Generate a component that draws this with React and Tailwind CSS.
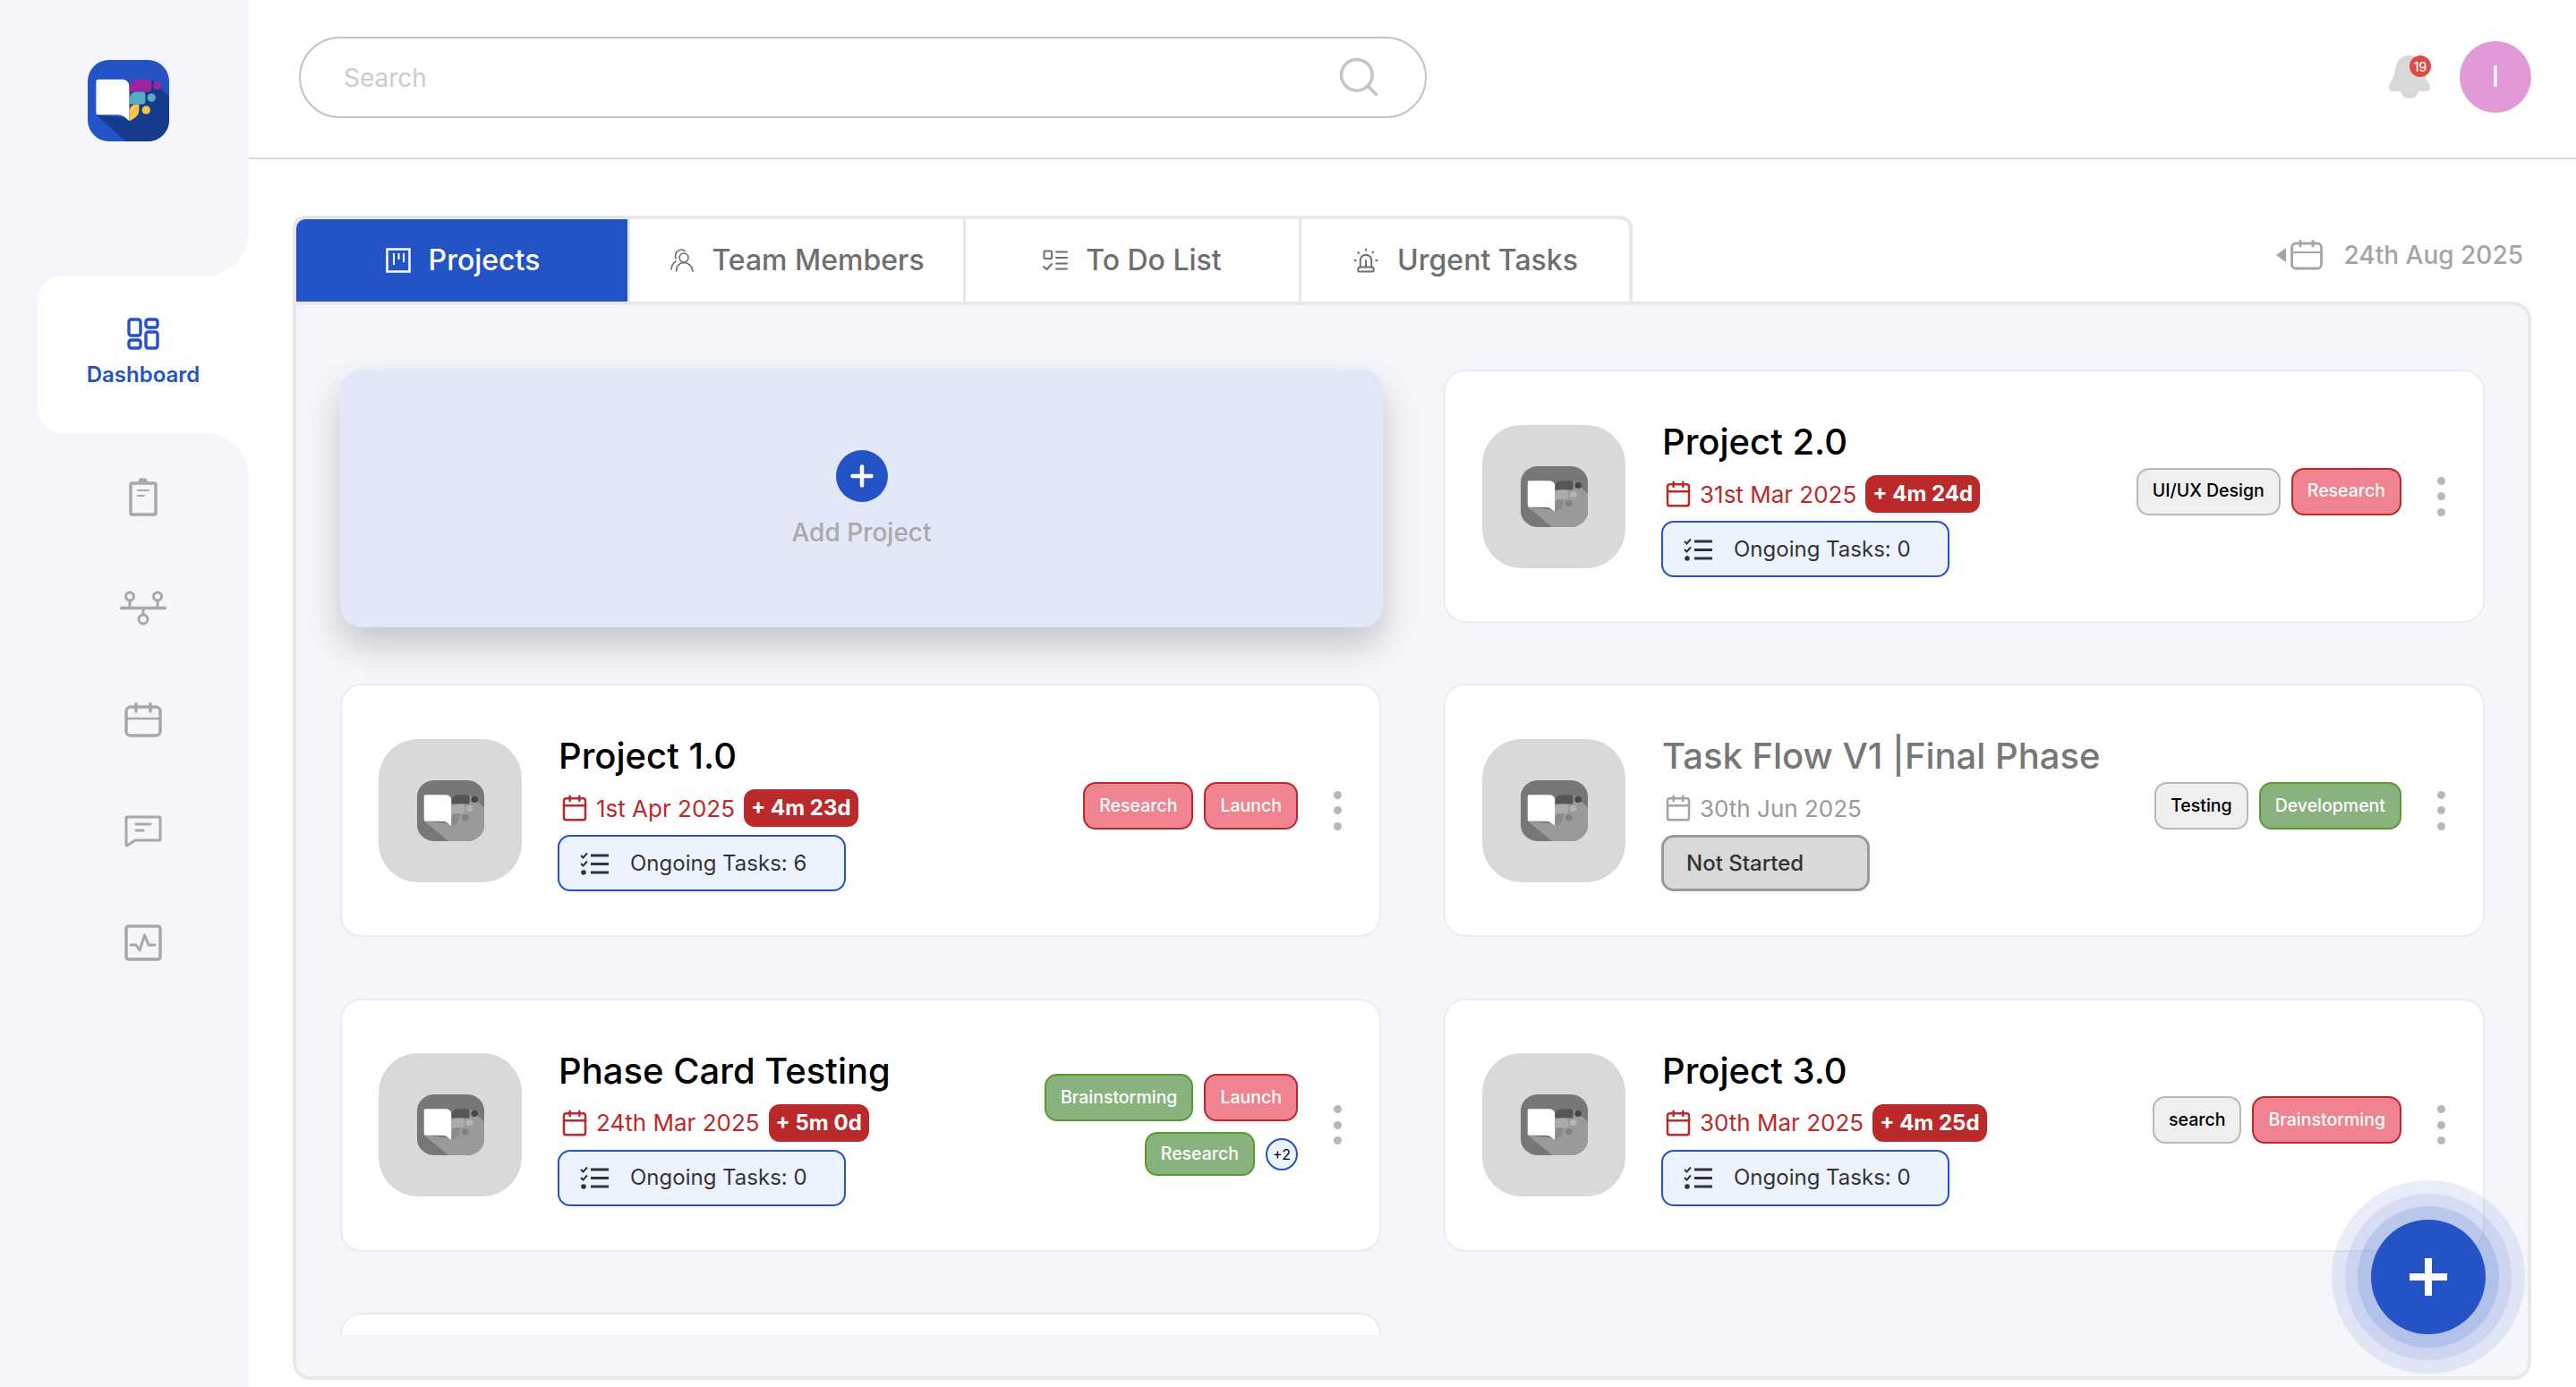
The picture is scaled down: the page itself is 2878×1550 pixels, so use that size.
import { Calendar, Search, Siren, Plus } from 'lucide-react'

const projects = [
  { title: 'Project 2.0', date: '31st Mar 2025', badge: '+ 4m 24d', tasks: 0, tags: [['UI/UX Design', 'gray'], ['Research', 'red']] },
  { title: 'Project 1.0', date: '1st Apr 2025', badge: '+ 4m 23d', tasks: 6, tags: [['Research', 'red'], ['Launch', 'red']] },
  { title: 'Task Flow V1 |Final Phase', date: '30th Jun 2025', muted: true, tags: [['Testing', 'gray'], ['Development', 'green']] },
  { title: 'Phase Card Testing', date: '24th Mar 2025', badge: '+ 5m 0d', tasks: 0, wrap: true, tags: [['Brainstorming', 'green'], ['Launch', 'red'], ['Research', 'green']], more: 2 },
  { title: 'Project 3.0', date: '30th Mar 2025', badge: '+ 4m 25d', tasks: 0, tags: [['search', 'gray'], ['Brainstorming', 'red']] },
]

const tagStyles = {
  gray: 'bg-[#efefef] border-[#b8b8b8] text-black',
  red: 'bg-[#f08391] border-[#ba2a2a] text-white',
  green: 'bg-[#8ab27f] border-[#569c30] text-white',
}

function Logo({ gray, className }) {
  const c = gray
    ? { bg: '#777777', shadow: '#9a9a9a', a: '#565656', b: '#ababab', d: '#8a8a8a', dotA: '#444444', dotB: '#b5b5b5', dotC: '#808080' }
    : { bg: '#2353c5', shadow: '#163a8c', a: '#9c259f', b: '#56abc4', d: '#f7c544', dotA: '#9c259f', dotB: '#56abc4', dotC: '#f7c544' }
  return (
    <svg viewBox="0 0 92 92" className={className} preserveAspectRatio="none">
      <defs>
        <clipPath id={gray ? 'logoGray' : 'logoColor'}>
          <rect width="92" height="92" rx="24" />
        </clipPath>
      </defs>
      <g clipPath={`url(#${gray ? 'logoGray' : 'logoColor'})`}>
        <rect width="92" height="92" fill={c.bg} />
        <path d="M10 62 L43 92 L92 92 L92 41 L72 22 L47 30 L47 66 Z" fill={c.shadow} />
      </g>
      <path d="M12 22 H40 Q47 23 47 31 V69 L41 64 Q38 62 34 62 H12 Q9.5 62 9.5 60 V24 Q9.5 22 12 22 Z" fill="#fff" />
      <path d="M47 36 V31 Q48 22 57 22 H69 Q72 22 72 25 V33 Q72 36 69 36 Z" fill={c.a} />
      <path d="M47 50 V44 Q48 36 56 36 H62 Q65 36 65 39 V47 Q65 50 62 50 Z" fill={c.b} />
      <path d="M47 69 V58 Q48 50 55 50 H58 V57 Q58 64 47 69 Z" fill={c.d} />
      <circle cx="78.7" cy="29" r="4.7" fill={c.dotA} />
      <circle cx="72" cy="42.5" r="4.7" fill={c.dotB} />
      <circle cx="66" cy="56.5" r="4.7" fill={c.dotC} />
    </svg>
  )
}

function TaskListIcon() {
  return (
    <svg width="32" height="26" viewBox="0 0 32 26" fill="none" stroke="#333" className="shrink-0">
      <path d="M1 4 L3.5 6.5 L8 1.5" strokeWidth="2" />
      <path d="M1 13 L3.5 15.5 L8 10.5" strokeWidth="2" />
      <circle cx="4" cy="23" r="2.8" fill="#333" stroke="none" />
      <path d="M12 4 H32 M12 13.5 H32 M12 23 H32" strokeWidth="3" />
    </svg>
  )
}

function ProjectCard({ project }) {
  const { title, date, badge, tasks, tags, more, muted, wrap } = project
  return (
    <div className="h-[283px] bg-white border-2 border-[#e9ecf6] rounded-[24px] flex items-center pl-[41px] pr-[42px]">
      <div className="w-[160px] h-[160px] rounded-[44px] bg-[#d9d9d9] flex items-center justify-center shrink-0">
        <Logo gray className="w-[75px] h-[68px]" />
      </div>

      <div className="ml-[40px] flex flex-col items-start mt-[6px]">
        <p className={`text-[40px] leading-[48px] font-medium whitespace-nowrap pl-[1px] ${muted ? 'text-[#777777]' : 'text-black'}`}>{title}</p>
        <div className="flex items-center mt-[13px] h-[42px] pl-[3px]">
          <Calendar size={32} strokeWidth={1.9} className={muted ? 'text-[#a3a3a3]' : 'text-[#ba2a2a]'} />
          <span className={`text-[26px] ml-[8px] whitespace-nowrap ${muted ? 'text-[#9a9a9a]' : 'text-[#ba2a2a]'}`}>{date}</span>
          {badge && (
            <span className="ml-[10px] h-[42px] px-[8px] rounded-[12px] bg-[#ba2a2a] text-white text-[24px] font-bold flex items-center whitespace-nowrap">{badge}</span>
          )}
        </div>
        {muted ? (
          <div className="mt-[9px] w-[233px] h-[63px] rounded-[14px] bg-[#d9d9d9] border-[3px] border-[#9a9a9a] flex items-center pl-[25px] text-[24px] font-medium text-[#333333]">
            Not Started
          </div>
        ) : (
          <div className="mt-[9px] w-[322px] h-[63px] rounded-[14px] bg-[#edf3fe] border-[2.5px] border-[#2353c5] flex items-center pl-[23px] gap-[24px] text-[24px] text-[#333333] whitespace-nowrap">
            <TaskListIcon />
            Ongoing Tasks: {tasks}
          </div>
        )}
      </div>

      <div className={`ml-auto flex flex-wrap justify-end items-center gap-x-[12px] gap-y-[12px] ${wrap ? 'w-[300px]' : 'mb-[11px]'}`}>
        {tags.map(([label, tone], i) => (
          <span key={label} className={`${wrap && i === 2 ? 'h-[49px]' : 'h-[53px]'} px-[16px] border-[2.5px] rounded-[14px] flex items-center text-[19.5px] font-medium whitespace-nowrap ${tagStyles[tone]}`}>
            {label}
          </span>
        ))}
        {more && (
          <span className="w-[36px] h-[36px] rounded-full bg-[#edf3fe] border-2 border-[#2353c5] flex items-center justify-center text-[16px] text-black">+{more}</span>
        )}
      </div>

      <div className="ml-[40px] flex flex-col gap-[8.5px] shrink-0">
        <span className="w-[9px] h-[9px] rounded-full bg-[#b8b8b8]" />
        <span className="w-[9px] h-[9px] rounded-full bg-[#b8b8b8]" />
        <span className="w-[9px] h-[9px] rounded-full bg-[#b8b8b8]" />
      </div>
    </div>
  )
}

function SideNav() {
  const stroke = { fill: 'none', stroke: '#a8a8a8', strokeWidth: 3.5, strokeLinecap: 'round', strokeLinejoin: 'round' }
  return (
    <div className="flex-1 bg-[#f4f6fb] rounded-tr-[48px] pl-[42px] pt-[9px] flex flex-col items-center">
      <div className="h-[124.5px] flex items-center">
        <svg width="32" height="43" viewBox="0 0 32 43" {...stroke}>
          <rect x="2" y="6" width="28" height="35" rx="1.5" />
          <rect x="11" y="1" width="9" height="5" rx="2" fill="#a8a8a8" strokeWidth="1" />
          <path d="M10 14 H22 M10 20 H17" strokeWidth="2.2" />
        </svg>
      </div>
      <div className="h-[124.5px] flex items-center">
        <svg width="52" height="39" viewBox="0 0 52 39" {...stroke}>
          <path d="M1.5 19.5 H50.5" />
          <circle cx="11" cy="6.5" r="4.5" strokeWidth="3" />
          <circle cx="42" cy="6.5" r="4.5" strokeWidth="3" />
          <circle cx="26" cy="32" r="5" strokeWidth="3" />
          <path d="M11 11 V19 M42 11 V19 M26 19 V27" strokeWidth="3" />
        </svg>
      </div>
      <div className="h-[124.5px] flex items-center">
        <svg width="42" height="39" viewBox="0 0 42 39" {...stroke}>
          <rect x="2" y="5" width="38" height="32" rx="5" />
          <path d="M2 18 H40" strokeWidth="2.5" />
          <path d="M13 1.5 V10 M29 1.5 V10" />
        </svg>
      </div>
      <div className="h-[124.5px] flex items-center">
        <svg width="42" height="36" viewBox="0 0 42 36" {...stroke}>
          <path d="M3 2 H39 Q40 2 40 3 V27 Q40 28 39 28 H12 L3 34 Q2 34 2 33 V3 Q2 2 3 2 Z" strokeWidth="3" />
          <path d="M13 10 H29 M13 17 H21" strokeWidth="2.8" />
        </svg>
      </div>
      <div className="h-[124.5px] flex items-center">
        <svg width="42" height="41" viewBox="0 0 42 41" {...stroke}>
          <rect x="2" y="2" width="38" height="37" rx="2.5" />
          <path d="M7 23 H13 L17 29 L22.5 12 L27 23 H34" strokeWidth="3" />
        </svg>
      </div>
    </div>
  )
}

function Tabs() {
  const tabClass = 'h-[92px] flex items-center justify-center text-[32px] font-medium'
  return (
    <div className="flex border-t-4 border-x-4 border-[#e8e8e8] rounded-t-[14px] overflow-hidden bg-[#e8e8e8] gap-[3px] w-fit">
      <div className={`${tabClass} gap-[20px] pl-[2px] bg-[#2353c5] text-white w-[370px]`}>
        <svg width="28" height="28" viewBox="0 0 28 28" fill="none" stroke="#fff" strokeWidth="2.5">
          <rect x="1.5" y="1.5" width="25" height="25" />
          <path d="M9 6 V19 M14.5 6 V13 M20 6 V16" strokeWidth="2" />
        </svg>
        Projects
      </div>
      <div className={`${tabClass} gap-[20px] pl-[2px] w-[372px] bg-white text-[#6f6f6f]`}>
        <svg width="26" height="26" viewBox="0 0 26 26" fill="none" stroke="#6f6f6f" strokeWidth="1.6" strokeLinecap="round">
          <circle cx="15" cy="10" r="5" />
          <path d="M6.5 25 Q7 16 15 15.5 Q23.5 16 25 25" />
          <path d="M6 11 Q4 3 11.5 1 Q14 .6 16 2.4" />
          <path d="M1 23 Q1.5 17 6 14" />
        </svg>
        Team Members
      </div>
      <div className={`${tabClass} gap-[20px] w-[372px] bg-white text-[#6f6f6f]`}>
        <svg width="28" height="24" viewBox="0 0 28 24" fill="none" stroke="#6f6f6f" strokeWidth="2" strokeLinecap="round">
          <rect x="1.5" y="1.5" width="8.5" height="8.5" rx="1" />
          <path d="M1 19 L4.5 22 L10 16" />
          <path d="M15 2.5 H27 M15 9 H27 M15 15.5 H27 M15 21.5 H27" />
        </svg>
        To Do List
      </div>
      <div className={`${tabClass} gap-[20px] w-[366px] bg-white text-[#6f6f6f]`}>
        <Siren size={30} strokeWidth={1.6} />
        Urgent Tasks
      </div>
    </div>
  )
}

export default function App() {
  return (
    <div className="flex h-screen w-full overflow-hidden bg-white font-['Inter',sans-serif]">
      {/* Sidebar */}
      <aside className="w-[278px] shrink-0 flex flex-col">
        <div className="h-[308px] bg-[#f4f6fb] rounded-br-[48px] pt-[67px] pl-[98px]">
          <Logo className="w-[91px] h-[91px]" />
        </div>
        <div className="bg-[#f4f6fb] pl-[42px]">
          <div className="h-[176px] bg-white rounded-l-[28px] flex flex-col items-center justify-center gap-[10px]">
            <svg width="36" height="36" viewBox="0 0 36 36" fill="none" stroke="#2353c5" strokeWidth="3.4">
              <rect x="2" y="2" width="13" height="18" rx="2.5" />
              <rect x="2" y="25" width="13" height="9" rx="2.5" />
              <rect x="21" y="2" width="13" height="9" rx="2.5" />
              <rect x="21" y="16" width="13" height="18" rx="2.5" />
            </svg>
            <span className="text-[24px] font-semibold text-[#2353c5]">Dashboard</span>
          </div>
        </div>
        <SideNav />
      </aside>

      <main className="flex-1 min-w-0 flex flex-col">
        {/* Top bar */}
        <header className="h-[178px] shrink-0 border-b-2 border-[#dcdcdc] flex items-center justify-between pl-[56px] pr-[50px] pb-[4px]">
          <div className="w-[1260px] h-[91px] rounded-full border-2 border-[#c4c4c4] flex items-center justify-between pl-[48px] pr-[48px]">
            <span className="text-[28px] text-[#cccccc] mt-[1px]">Search</span>
            <Search size={52} strokeWidth={1.6} className="text-[#c4c4c4]" />
          </div>
          <div className="flex items-center gap-[33px]">
            <div className="relative w-[46px] h-[48px]">
              <svg width="46" height="48" viewBox="0 0 46 48" fill="#d9d9d9">
                <path d="M23 0 C12 0 8 8 7 16 C6 24 2 29 0 34 C-1 38 2 40 5 40 H13 C14 45 18 48 23 48 C28 48 32 45 33 40 H41 C44 40 47 38 46 34 C44 29 40 24 39 16 C38 8 34 0 23 0 Z" />
              </svg>
              <span className="absolute top-0 -right-[1px] w-[24px] h-[24px] rounded-full bg-[#dd4b44] text-white text-[14px] font-medium flex items-center justify-center">19</span>
            </div>
            <div className="w-[80px] h-[80px] rounded-full bg-[#e199d8] text-white text-[33px] flex items-center justify-center">I</div>
          </div>
        </header>

        <div className="flex-1 min-h-0 flex flex-col pl-[49px] pr-[50px] pt-[63px] pb-[8px]">
          <div className="flex items-center justify-between">
            <Tabs />
            <div className="flex items-center mb-[8px] mr-[9px] text-[28px] font-medium text-[#a5a5a5]">
              <span className="w-0 h-0 border-y-[8px] border-y-transparent border-r-[11px] border-r-[#a5a5a5] mr-[5px]" />
              <svg width="36" height="34" viewBox="0 0 36 34" fill="none" stroke="#a5a5a5" strokeWidth="2.8" strokeLinecap="round">
                <rect x="1.5" y="4" width="33" height="28" rx="4.5" />
                <path d="M1.5 14 H34.5" strokeWidth="2.2" />
                <path d="M11 1.5 V7 M25 1.5 V7" />
              </svg>
              <span className="ml-[24px]">24th Aug 2025</span>
            </div>
          </div>

          {/* Panel */}
          <div className="relative flex-1 min-h-0 bg-[#f4f6fb] border-4 border-[#e8e8e8] rounded-b-[20px] rounded-tr-[20px] pb-[47px]">
            <div className="h-full overflow-hidden pl-[49px] pr-[48px] pt-[72px]">
              <div className="grid grid-cols-2 gap-x-[70px] gap-y-[68.3px]">
                <div className="self-start w-[1165px] h-[288px] -mb-[5px] rounded-[24px] bg-[#e3e8f9] shadow-[0_20px_40px_rgba(0,0,0,0.2)] flex flex-col items-center pt-[90px] text-[28px] font-medium text-[#a9a9a9]">
                  <span className="w-[58px] h-[58px] rounded-full bg-[#2353c5] flex items-center justify-center">
                    <Plus size={36} strokeWidth={3} className="text-white" />
                  </span>
                  <span className="mt-[13px]">Add Project</span>
                </div>
                {projects.map((project) => (
                  <ProjectCard key={project.title} project={project} />
                ))}
                <div className="h-[283px] bg-white border-2 border-[#e9ecf6] rounded-[24px]" />
              </div>
            </div>

            {/* Floating add button */}
            <div className="absolute right-[3px] bottom-[3px] w-[216px] h-[216px] rounded-full bg-[#2353c5]/10 flex items-center justify-center">
              <div className="w-[186px] h-[186px] rounded-full bg-[#2353c5]/10 flex items-center justify-center">
                <div className="w-[158px] h-[158px] rounded-full bg-[#2353c5]/15 flex items-center justify-center">
                  <div className="w-[128px] h-[128px] rounded-full bg-[#2353c5] flex items-center justify-center">
                    <span className="relative w-[42px] h-[42px]">
                      <span className="absolute left-[17px] top-0 w-[8px] h-[42px] bg-white" />
                      <span className="absolute left-0 top-[17px] w-[42px] h-[8px] bg-white" />
                    </span>
                  </div>
                </div>
              </div>
            </div>
          </div>
        </div>
      </main>
    </div>
  )
}
